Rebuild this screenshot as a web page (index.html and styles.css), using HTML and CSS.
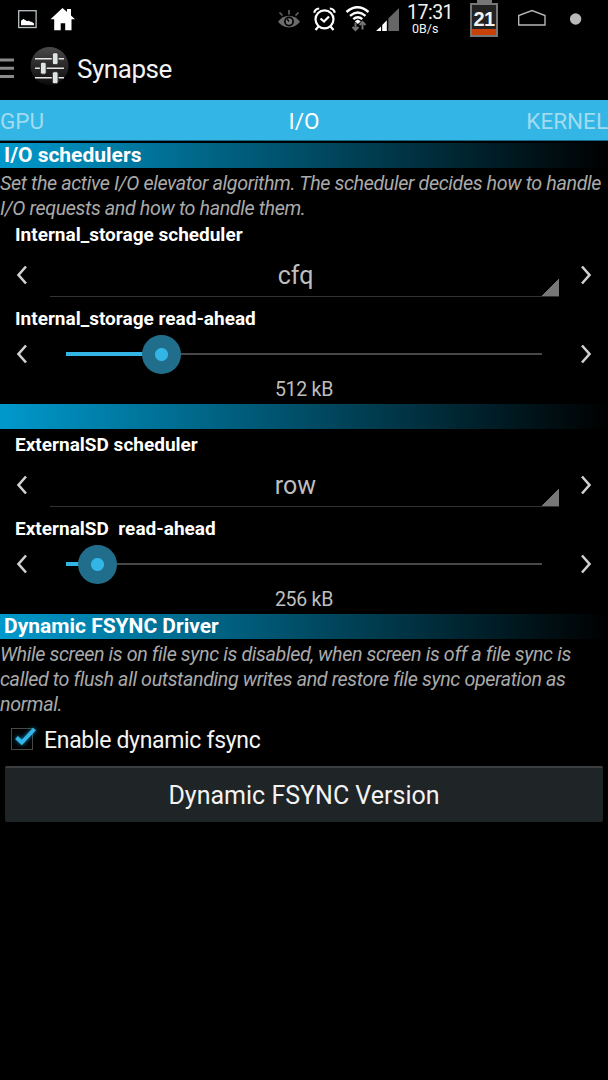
FILE: index.html
```html
<!DOCTYPE html>
<html lang="en">

<head>
  <meta charset="UTF-8">
  <meta name="viewport" content="width=device-width, initial-scale=1.0">
  <title>Synapse</title>
  <link rel="stylesheet" href="styles.css">
</head>

<body>
  <div class="status-bar">
    <svg class="notifications" width="100" height="38" viewBox="0 0 100 38">
      <rect x="18.7" y="10.7" width="17.4" height="16.8" fill="none" stroke="#bbc2c4" stroke-width="1.3"/>
      <path d="M21 25.2v-4.400q1.500-.8 2-1.800 1-.3 1.800 1 1.200 0 2 1.200 2-.8 3.200.3 2 0 4 2v1.700z" fill="#fff"/>
      <path d="M62.500 8l4.500 4V9h4v6.600l4 3.700h-3.500v11h-6.300v-7h-4.500v7h-6.500v-11h-3.700z" fill="#fff"/>
    </svg>
    <svg class="indicators" width="136" height="38" viewBox="265 0 136 38">
      <path d="M278 21.800q4.500-6 11-6t11 6q-4.500 5.700-11 5.700t-11-5.700z" fill="#6b6b6b"/>
      <circle cx="289" cy="21.500" r="4.900" fill="#000"/>
      <circle cx="289" cy="21.500" r="3.200" fill="#777"/>
      <path d="M289 21.500l-1.800-2.500" stroke="#000" stroke-width="1.300"/>
      <path d="M279.500 12.500l3 3M289 10v4.500M298.500 12.500l-3 3" stroke="#666" stroke-width="1.600"/>
      <g fill="none" stroke="#fff" stroke-width="2.200">
        <circle cx="324.500" cy="19.300" r="9"/>
        <path d="M320.500 18.500l3.500 3 5-5M314.200 12.800q.8-4 5-4.300M334.800 12.800q-.8-4-5-4.300M318.500 26.500l-3 3.500M330.500 26.500l3 3.500"/>
      </g>
      <g fill="none" stroke="#fff" stroke-width="2.400">
        <path d="M346.500 12q11-9.500 22 0M350 15.800q7.800-6.500 15.500 0M353.300 19.200q4.500-4 9 0"/>
      </g>
      <path d="M354.800 21.200l3-1.700 3 1.700-3 2.800z" fill="#fff"/>
      <path d="M355.500 22.500v7.500m-3-3l3 3 3-3M362.500 29.500V22m-3 3l3-3 3 3" fill="none" stroke="#747474" stroke-width="2"/>
      <path d="M388.300 31V18.500L399 8v23z" fill="#666"/>
      <path d="M376 31l5-4.500V31zM382.200 31v-6l4.600-4.700V31z" fill="#fff"/>
    </svg>
    <div class="clock">
      <span class="time">17:31</span>
      <span class="speed">0B/s</span>
    </div>
    <div class="battery"><span>21</span></div>
    <svg class="nav-icons" width="100" height="38" viewBox="508 0 100 38">
      <path d="M518.700 25v-9.500L532 10.500l13 5V25z" fill="none" stroke="#b5b5b5" stroke-width="1.400"/>
      <circle cx="575.600" cy="19" r="5.700" fill="#b9b9b9"/>
    </svg>
  </div>

  <div class="action-bar">
    <svg width="77" height="62" viewBox="0 38 77 62">
      <defs>
        <linearGradient id="disc" x1="0" y1="0" x2="0" y2="1">
          <stop offset="0" stop-color="#4a4a4a"/>
          <stop offset=".5" stop-color="#292929"/>
          <stop offset="1" stop-color="#0c0c0c"/>
        </linearGradient>
      </defs>
      <path d="M0 60h14M0 68.300h14M0 76.600h14" stroke="#8a8a8a" stroke-width="3"/>
      <circle cx="49.500" cy="66" r="19" fill="url(#disc)"/>
      <path d="M35 58.700h29M35 68.200h29M35 77.800h29" stroke="#e5e5e5" stroke-width="1.500"/>
      <g fill="#dfe5e5" stroke="#292929" stroke-width="1">
        <rect x="52.300" y="52.700" width="5.800" height="12" rx="1.800"/>
        <rect x="40.400" y="62.200" width="5.800" height="12" rx="1.800"/>
        <rect x="52.300" y="71.700" width="5.800" height="12" rx="1.800"/>
      </g>
    </svg>
    <h1>Synapse</h1>
  </div>

  <div class="tabs">
    <span class="tab">GPU</span>
    <span class="tab active">I/O</span>
    <span class="tab">KERNEL</span>
  </div>

  <h2 class="section-title">I/O schedulers</h2>
  <p class="description">Set the active I/O elevator algorithm. The scheduler decides how to handle<br>I/O requests and how to handle them.</p>

  <div class="control-group">
    <h3>Internal_storage scheduler</h3>
    <div class="spinner-row">
      <svg class="arrow" viewBox="0 0 12 20"><path d="M10 1.500L2.500 10 10 18.500"/></svg>
      <div class="spinner">cfq</div>
      <svg class="arrow" viewBox="0 0 12 20"><path d="M2 1.500L9.500 10 2 18.500"/></svg>
    </div>
    <h3>Internal_storage read-ahead</h3>
    <div class="slider-row">
      <svg class="arrow" viewBox="0 0 12 20"><path d="M10 1.500L2.500 10 10 18.500"/></svg>
      <div class="slider"><div class="progress" style="width: 20%"><div class="thumb"></div></div></div>
      <svg class="arrow" viewBox="0 0 12 20"><path d="M2 1.500L9.500 10 2 18.500"/></svg>
    </div>
    <div class="value">512 kB</div>
  </div>

  <h2 class="section-title"></h2>

  <div class="control-group external">
    <h3>ExternalSD scheduler</h3>
    <div class="spinner-row">
      <svg class="arrow" viewBox="0 0 12 20"><path d="M10 1.500L2.500 10 10 18.500"/></svg>
      <div class="spinner">row</div>
      <svg class="arrow" viewBox="0 0 12 20"><path d="M2 1.500L9.500 10 2 18.500"/></svg>
    </div>
    <h3>ExternalSD&nbsp; read-ahead</h3>
    <div class="slider-row">
      <svg class="arrow" viewBox="0 0 12 20"><path d="M10 1.500L2.500 10 10 18.500"/></svg>
      <div class="slider"><div class="progress" style="width: 6.6%"><div class="thumb"></div></div></div>
      <svg class="arrow" viewBox="0 0 12 20"><path d="M2 1.500L9.500 10 2 18.500"/></svg>
    </div>
    <div class="value">256 kB</div>
  </div>

  <h2 class="section-title">Dynamic FSYNC Driver</h2>
  <p class="description fsync">While screen is on file sync is disabled, when screen is off a file sync is<br>called to flush all outstanding writes and restore file sync operation as<br>normal.</p>

  <div class="checkbox-row">
    <svg width="44" height="36" viewBox="0 722 44 36">
      <rect x="11.500" y="728.500" width="21" height="21" fill="none" stroke="#484848"/>
      <path class="check" d="M16.500 737.500l5.300 5L34.500 729" fill="none" stroke="#33b5e5" stroke-width="4"/>
    </svg>
    <span>Enable dynamic fsync</span>
  </div>

  <button class="version-button">Dynamic FSYNC Version</button>
</body>

</html>
```
FILE: styles.css
```css
* {
  box-sizing: border-box;
}

body {
  font-family: Roboto, sans-serif;
  margin: 0;
  min-height: 1080px;
  background-color: #000;
  color: #f3f3f3;
  overflow: hidden;
}

h1, h2, h3, p {
  margin: 0;
}

svg {
  display: block;
  flex: none;
}

.status-bar {
  height: 38px;
  display: flex;
}

.indicators {
  margin-left: 165px;
}

.clock {
  width: 63px;
  padding: 1px 0 0 6px;
  white-space: nowrap;
}

.clock span {
  display: block;
}

.time {
  font-size: 19.5px;
  line-height: 23px;
  letter-spacing: -0.5px;
}

.speed {
  font-size: 12.5px;
  line-height: 10px;
  padding-left: 5px;
}

.battery {
  width: 28px;
  height: 34px;
  margin: 3px 10px 0 6px;
  border: 2px solid #777;
  background: linear-gradient(#222 24px, #c84208 24px);
  font: bold 20px "Liberation Sans", sans-serif;
  letter-spacing: -0.5px;
  text-align: center;
}

.battery::before {
  content: "";
  display: block;
  width: 15px;
  height: 3px;
  margin: -5px auto 2px;
  background-color: #777;
}

.battery span {
  display: block;
  line-height: 28px;
}

.action-bar {
  height: 62px;
  display: flex;
}

.action-bar h1 {
  font-size: 26px;
  font-weight: 400;
  line-height: 62px;
  letter-spacing: -0.45px;
}

.tabs {
  height: 41px;
  display: grid;
  grid-template-columns: 1fr 1fr 1fr;
  line-height: 43px;
  font-size: 22.5px;
  background-color: #33b5e5;
  border-bottom: 1px solid #146b8c;
  margin-bottom: 2px;
}

.tab {
  color: #a1dbf0;
}

.tab.active {
  color: #fff;
  text-align: center;
}

.tab:last-child {
  text-align: right;
}

.section-title {
  height: 25px;
  padding-left: 4px;
  font-size: 21px;
  font-weight: 700;
  line-height: 25px;
  color: #fff;
  background: linear-gradient(90deg, #0099cc, #004d66 50%, #000);
}

.description {
  height: 54px;
  padding-top: 3px;
  font-size: 19.7px;
  font-style: italic;
  line-height: 25px;
  letter-spacing: -0.38px;
  color: #aaa;
  white-space: nowrap;
}

.fsync {
  height: 82px;
}

.control-group {
  height: 182px;
}

.control-group.external {
  height: 185px;
  padding-top: 3px;
}

.control-group h3 {
  height: 25px;
  padding-left: 15px;
  font-size: 19px;
  font-weight: 700;
  line-height: 25px;
  color: #fff;
}

.spinner-row {
  height: 59px;
  display: flex;
  align-items: flex-start;
  justify-content: space-between;
  padding: 6px 16px 0;
}

.spinner-row .arrow {
  margin-top: 12px;
}

.arrow {
  width: 12px;
  height: 20px;
  fill: none;
  stroke: #d0d0d0;
  stroke-width: 2.6;
}

.spinner {
  width: 509px;
  height: 44px;
  padding-right: 17px;
  font-size: 25px;
  line-height: 46px;
  text-align: center;
  color: #bebebe;
  border-bottom: 1px solid #333;
  background: linear-gradient(135deg, transparent 50%, #777 50%) right bottom / 17px 17px no-repeat;
}

.slider-row {
  height: 46px;
  display: flex;
  align-items: center;
  justify-content: space-between;
  padding: 0 16px;
}

.slider {
  width: 476px;
  height: 2px;
  background-color: #484848;
}

.progress {
  display: flex;
  align-items: center;
  justify-content: flex-end;
  height: 4px;
  margin-top: -1px;
  background-color: #33b5e5;
}

.thumb {
  flex: none;
  width: 39px;
  height: 39px;
  margin-right: -19.5px;
  border-radius: 50%;
  background: radial-gradient(circle, #33b5e5 6px, #206e8b 7px);
}

.value {
  font-size: 19.5px;
  line-height: 26px;
  letter-spacing: -0.25px;
  text-align: center;
  color: #bebebe;
}

.checkbox-row {
  height: 38px;
  display: flex;
  align-items: center;
  font-size: 23px;
  letter-spacing: -0.32px;
}

.check {
  filter: drop-shadow(0 0 2px #0086b3);
}

.version-button {
  display: block;
  width: 598px;
  height: 56px;
  margin: 7px 5px 0;
  padding: 0;
  font-family: inherit;
  font-size: 25px;
  color: #f3f3f3;
  background-color: #1f2427;
  border: none;
  border-top: 2px solid #3b3f41;
  border-radius: 2px;
}
```
